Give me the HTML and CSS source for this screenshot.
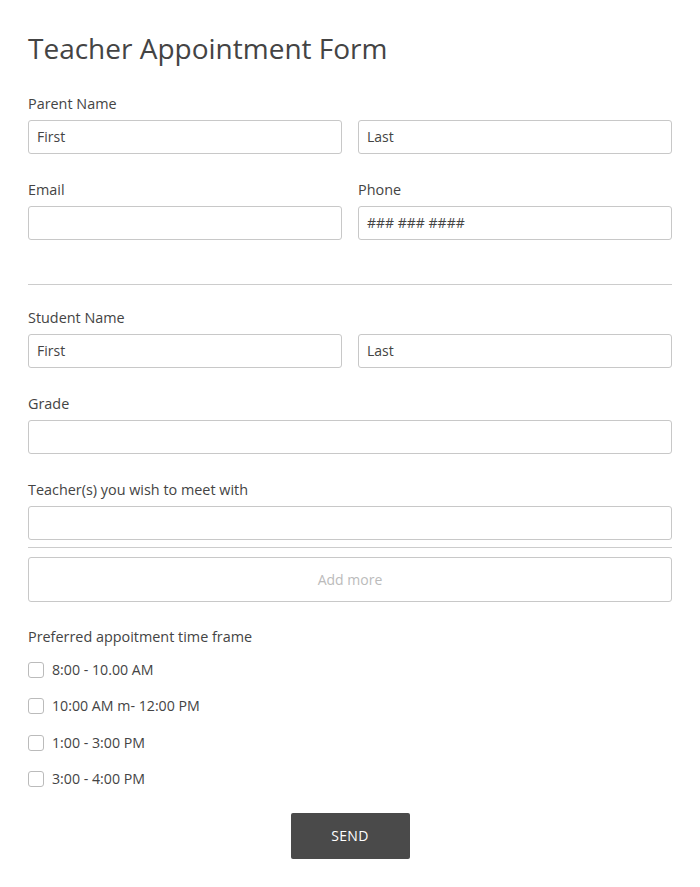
FILE: index.html
```html
<!DOCTYPE html>
<html>
<head>
<meta charset="utf-8">
<link rel="stylesheet" href="styles.css">
</head>
<body>
<form class="form">
  <h1 class="title">Teacher Appointment Form</h1>

  <div class="field">
    <div class="label">Parent Name</div>
    <div class="row">
      <div class="input">First</div>
      <div class="input">Last</div>
    </div>
  </div>

  <div class="row top">
    <div class="field">
      <div class="label">Email</div>
      <div class="input"></div>
    </div>
    <div class="field">
      <div class="label">Phone</div>
      <div class="input">### ### ####</div>
    </div>
  </div>

  <hr class="divider">

  <div class="field">
    <div class="label">Student Name</div>
    <div class="row">
      <div class="input">First</div>
      <div class="input">Last</div>
    </div>
  </div>

  <div class="field">
    <div class="label">Grade</div>
    <div class="input"></div>
  </div>

  <div class="field repeat">
    <div class="label">Teacher(s) you wish to meet with</div>
    <div class="input"></div>
    <div class="rule"></div>
    <div class="addmore">Add more</div>
  </div>

  <div class="field">
    <div class="label">Preferred appoitment time frame</div>
    <div class="checks">
      <div class="check"><span class="box"></span>8:00 - 10.00 AM</div>
      <div class="check"><span class="box"></span>10:00 AM m- 12:00 PM</div>
      <div class="check"><span class="box"></span>1:00 - 3:00 PM</div>
      <div class="check"><span class="box"></span>3:00 - 4:00 PM</div>
    </div>
  </div>

  <div class="actions">
    <div class="send">SEND</div>
  </div>
</form>
</body>
</html>
```
FILE: styles.css
```css
* { box-sizing: border-box; }
body {
  margin: 0;
  background: #fff;
  font-family: "Open Sans", "Liberation Sans", sans-serif;
  color: #444;
}
.form {
  padding: 28px 28px 0 28px;
  display: flex;
  flex-direction: column;
}
.title {
  margin: 0 0 26px 0;
  font-size: 28px;
  font-weight: 400;
  line-height: 40px;
  color: #444;
}
.field {
  display: flex;
  flex-direction: column;
  margin-bottom: 26px;
}
.field.repeat { margin-bottom: 25px; }
.row {
  display: grid;
  grid-template-columns: 1fr 1fr;
  column-gap: 16px;
}
.row.top .field { margin-bottom: 0; }
.label {
  font-size: 14.4px;
  line-height: 20px;
  margin-bottom: 6px;
  color: #444;
}
.input {
  height: 34px;
  border: 1px solid #c8c8c8;
  border-radius: 3px;
  padding: 0 8px;
  font-size: 14px;
  line-height: 32px;
  color: #444;
}
.divider {
  border: 0;
  border-top: 1px solid #ccc;
  margin: 44px 0 23px 0;
  height: 0;
}
.rule {
  height: 1px;
  background: #ccc;
  margin-top: 7px;
}
.addmore {
  margin-top: 9px;
  height: 45px;
  border: 1px solid #c8c8c8;
  border-radius: 3px;
  text-align: center;
  line-height: 43px;
  font-size: 14px;
  color: #bbb;
}
.checks {
  display: flex;
  flex-direction: column;
  gap: 16.33px;
  margin-top: 7px;
}
.check {
  display: flex;
  align-items: center;
  font-size: 14.2px;
  line-height: 20px;
  color: #444;
}
.box {
  width: 16px;
  height: 16px;
  border: 1px solid #bbb;
  border-radius: 3px;
  margin-right: 8px;
  flex: none;
}
.actions {
  display: flex;
  justify-content: center;
  margin-top: -2px;
}
.send {
  width: 119px;
  height: 46px;
  background: #4a4a4a;
  color: #fff;
  border-radius: 2px;
  text-align: center;
  line-height: 46px;
  font-size: 14px;
  letter-spacing: 0.3px;
}
```
